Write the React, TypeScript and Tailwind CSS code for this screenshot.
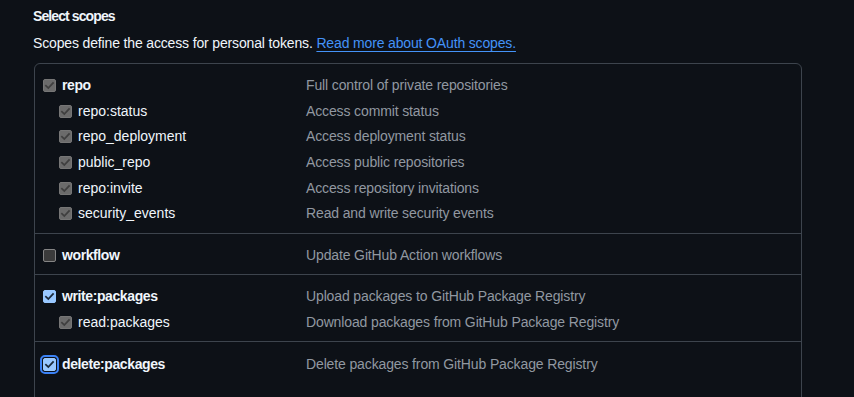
import React from "react";

type Kind = "disabled" | "unchecked" | "checked" | "focused";

function Box({ kind }: { kind: Kind }) {
  const base = "relative w-[13px] h-[13px] rounded-[2px] shrink-0 flex items-center justify-center";
  let cls = "";
  let check = "";
  if (kind === "disabled") {
    cls = "bg-[#6b6b6b] border border-[#767676]";
    check = "#3f3f3f";
  } else if (kind === "unchecked") {
    cls = "bg-[#3b3b3b] border border-[#858585]";
  } else if (kind === "checked") {
    cls = "bg-[#99c8ff] border border-[#99c8ff]";
    check = "#1b2a3b";
  } else {
    cls = "bg-[#99c8ff] border border-[#99c8ff] outline-2 outline-solid outline-[#3b82f6] outline-offset-[1px]";
    check = "#1b2a3b";
  }
  return (
    <span className={`${base} ${cls}`}>
      {check && (
        <svg width="11" height="11" viewBox="0 0 11 11" fill="none">
          <path d="M2 5.8 L4.3 8 L9 3" stroke={check} strokeWidth="1.8" strokeLinecap="square" />
        </svg>
      )}
    </span>
  );
}

type Row = { label: string; desc: string; kind: Kind; child?: boolean };

const groups: Row[][] = [
  [
    { label: "repo", desc: "Full control of private repositories", kind: "disabled" },
    { label: "repo:status", desc: "Access commit status", kind: "disabled", child: true },
    { label: "repo_deployment", desc: "Access deployment status", kind: "disabled", child: true },
    { label: "public_repo", desc: "Access public repositories", kind: "disabled", child: true },
    { label: "repo:invite", desc: "Access repository invitations", kind: "disabled", child: true },
    { label: "security_events", desc: "Read and write security events", kind: "disabled", child: true },
  ],
  [{ label: "workflow", desc: "Update GitHub Action workflows", kind: "unchecked" }],
  [
    { label: "write:packages", desc: "Upload packages to GitHub Package Registry", kind: "checked" },
    { label: "read:packages", desc: "Download packages from GitHub Package Registry", kind: "disabled", child: true },
  ],
  [{ label: "delete:packages", desc: "Delete packages from GitHub Package Registry", kind: "focused" }],
];

export default function App() {
  return (
    <div className="w-[854px] h-[397px] overflow-hidden bg-[#0d1117] text-[#f0f6fc] font-['Liberation_Sans',Arial,sans-serif] text-[14px]">
      <div className="pl-[33px] pt-[6px]">
        <div className="font-bold leading-[20px] tracking-[-0.9px]">Select scopes</div>
        <div className="mt-[7px] leading-[20px] tracking-[-0.15px]">
          Scopes define the access for personal tokens.{" "}
          <a className="text-[#4493f8] underline underline-offset-[3px]" href="#">
            Read more about OAuth scopes.
          </a>
        </div>
      </div>
      <div className="ml-[34px] mt-[10px] w-[768px] border border-[#3d444d] rounded-[6px] h-[400px]">
        {groups.map((g, gi) => (
          <div key={gi} className={`pt-[9px] pb-[6px] ${gi > 0 ? "border-t border-[#3d444d]" : ""}`}>
            {g.map((r) => (
              <div key={r.label} className="flex items-center h-[25.6px] pl-[8px]">
                <div className={`w-[263px] flex items-center gap-[6px] ${r.child ? "pl-[16px]" : ""}`}>
                  <Box kind={r.kind} />
                  <span className={r.child ? "" : "font-bold tracking-[-0.4px]"}>{r.label}</span>
                </div>
                <span className="text-[#9198a1] tracking-[-0.13px]">{r.desc}</span>
              </div>
            ))}
          </div>
        ))}
      </div>
    </div>
  );
}
